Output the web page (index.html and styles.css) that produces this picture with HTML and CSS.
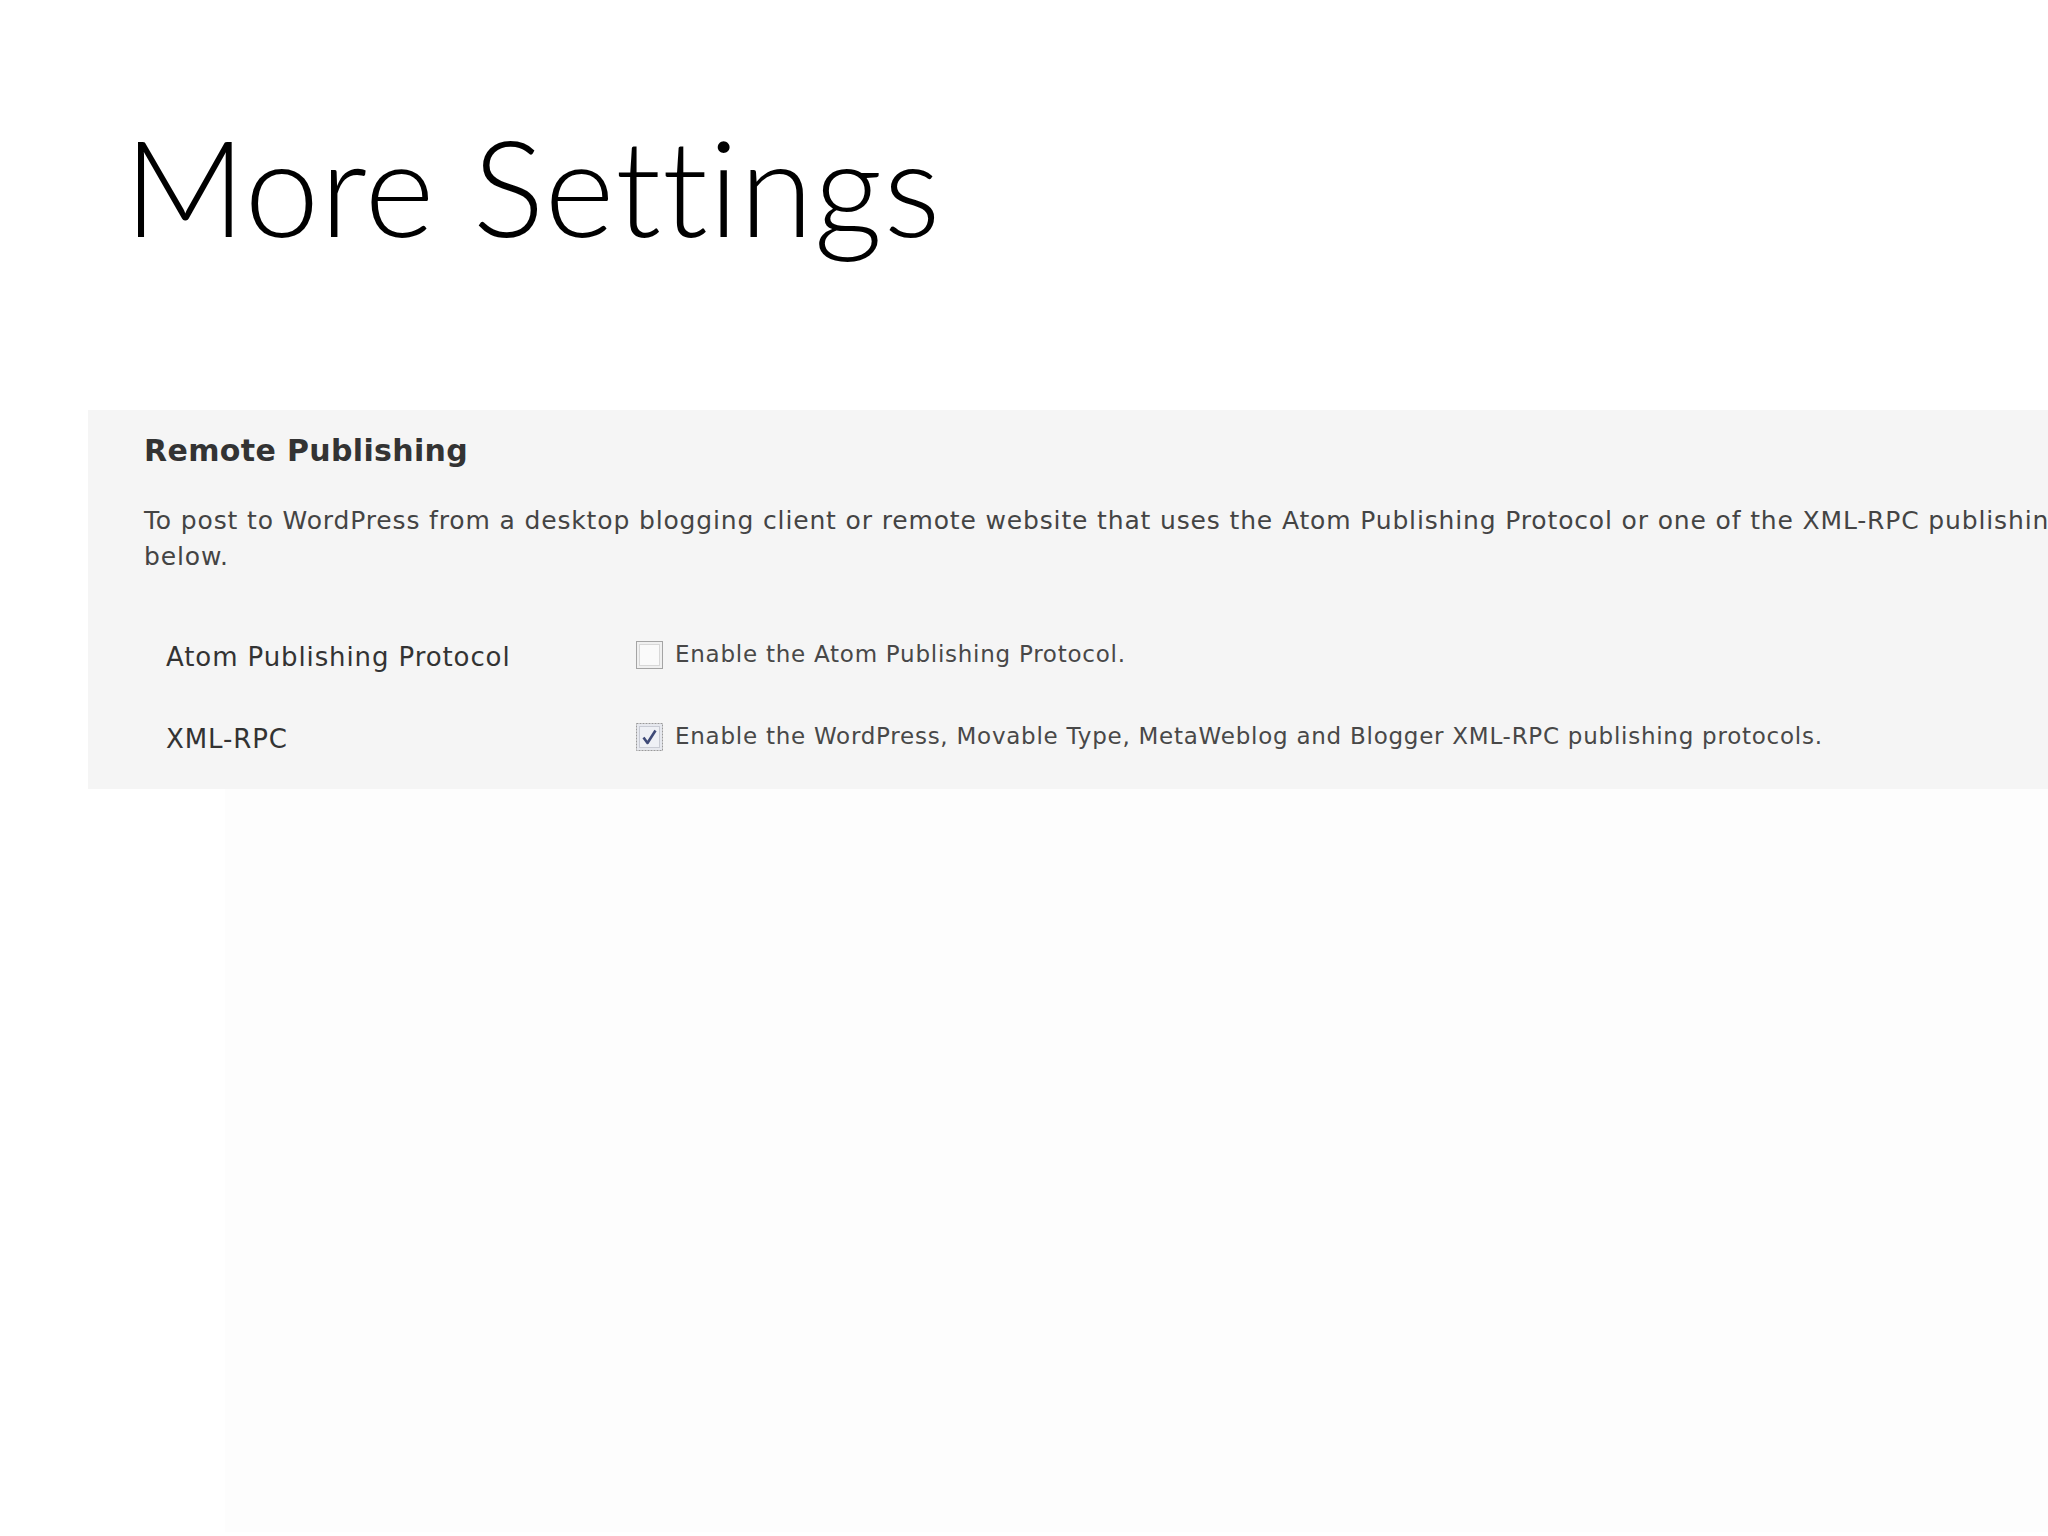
FILE: index.html
```html
<!DOCTYPE html>
<html lang="en">
<head>
<meta charset="utf-8">
<title>More Settings</title>
<link rel="stylesheet" href="styles.css">
</head>
<body>
<div class="slide">
  <h1 class="title">More Settings</h1>
  <div class="panel">
    <h3 class="panel-heading">Remote Publishing</h3>
    <p class="panel-text">To post to WordPress from a desktop blogging client or remote website that uses the Atom Publishing Protocol or one of the XML-RPC publishing interfaces you must enable them<br>below.</p>
    <div class="rows">
      <div class="row">
        <div class="label">Atom Publishing Protocol</div>
        <div class="field">
          <span class="checkbox">
            <svg width="27" height="28" viewBox="0 0 27 28">
              <rect x="0.5" y="0.5" width="26" height="27" fill="#f0f0f0" stroke="#a4a4a4"/>
              <rect x="3.5" y="3.5" width="20" height="21" fill="#fafafa" stroke="#d8d8d8"/>
            </svg>
          </span>
          <span class="desc">Enable the Atom Publishing Protocol.</span>
        </div>
      </div>
      <div class="row">
        <div class="label">XML-RPC</div>
        <div class="field">
          <span class="checkbox">
            <svg width="27" height="28" viewBox="0 0 27 28">
              <rect x="0.5" y="0.5" width="26" height="27" fill="#e6e8ee" stroke="#9a9a9a" stroke-dasharray="2 1"/>
              <rect x="3.5" y="3.5" width="20" height="21" fill="#eef0f5" stroke="#c8cbd4"/>
              <path d="M7.5 14.5 L11.5 20 L19.5 7.5" fill="none" stroke="#3e4a78" stroke-width="2.6" stroke-linejoin="round"/>
            </svg>
          </span>
          <span class="desc">Enable the WordPress, Movable Type, MetaWeblog and Blogger XML-RPC publishing protocols.</span>
        </div>
      </div>
    </div>
  </div>
  <div class="below"></div>
</div>
</body>
</html>
```
FILE: styles.css
```css
html, body {
  margin: 0;
  padding: 0;
  background: #ffffff;
  overflow: hidden;
}
.slide {
  width: 2048px;
  height: 1536px;
  overflow: hidden;
  display: flex;
  flex-direction: column;
}
.title {
  margin: 0;
  padding: 106px 0 0 124px;
  font-family: Lato, "Open Sans", sans-serif;
  font-weight: 300;
  font-size: 134px;
  line-height: 160px;
  color: #000;
  letter-spacing: 0.9px;
  font-variant-ligatures: none;
}
.panel {
  margin: 144px 0 0 88px;
  width: 2400px;
  flex: none;
  background: #f5f5f5;
  padding: 23px 0 30px 56px;
  font-family: "DejaVu Sans", Verdana, sans-serif;
}
.panel-heading {
  margin: 0;
  font-size: 30px;
  line-height: 36px;
  font-weight: bold;
  color: #333;
  letter-spacing: 0.35px;
}
.panel-text {
  margin: 34px 0 0 0;
  font-size: 25px;
  line-height: 36px;
  color: #444;
  white-space: nowrap;
  letter-spacing: 0.85px;
}
.rows {
  margin-top: 62px;
  display: flex;
  flex-direction: column;
  gap: 42px;
}
.row {
  display: flex;
  height: 40px;
}
.label {
  width: 470px;
  padding-left: 22px;
  font-size: 26px;
  line-height: 40px;
  color: #333;
  letter-spacing: 0.9px;
}
.field {
  display: flex;
  align-items: flex-start;
  gap: 12px;
}
.checkbox {
  display: block;
  margin-top: 4px;
  width: 27px;
  height: 28px;
}
.checkbox svg {
  display: block;
}
.desc {
  margin-top: -3px;
  font-size: 23px;
  line-height: 40px;
  color: #484848;
  letter-spacing: 0.75px;
}
.below {
  flex: 1;
  margin: 0 0 4px 225px;
  background: #fdfdfd;
}
```
